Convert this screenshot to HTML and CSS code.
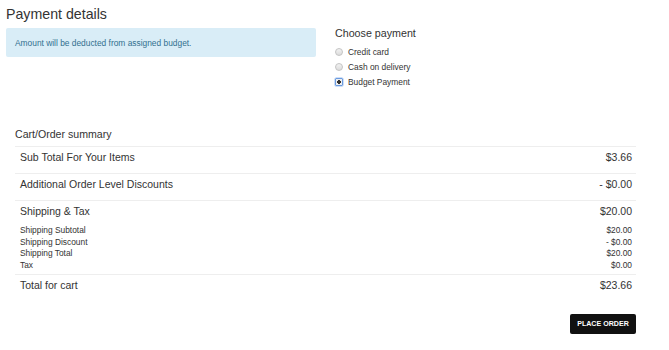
FILE: index.html
```html
<!DOCTYPE html>
<html lang="en">
<head>
  <meta charset="UTF-8">
  <meta name="viewport" content="width=device-width, initial-scale=1.0">
  <title>Payment details</title>
  <link rel="stylesheet" href="styles.css">
</head>
<body>
  <div class="top">
    <div class="col-left">
      <h1>Payment details</h1>
      <div class="alert">Amount will be deducted from assigned budget.</div>
    </div>
    <div class="col-right">
      <h4>Choose payment</h4>
      <label class="radio"><span class="dot"></span>Credit card</label>
      <label class="radio"><span class="dot"></span>Cash on delivery</label>
      <label class="radio"><span class="dot checked"></span>Budget Payment</label>
    </div>
  </div>

  <div class="summary">
    <h4 class="summary-title">Cart/Order summary</h4>
    <div class="row big">
      <span>Sub Total For Your Items</span>
      <span>$3.66</span>
    </div>
    <div class="row big">
      <span>Additional Order Level Discounts</span>
      <span>- $0.00</span>
    </div>
    <div class="group">
      <div class="row big head">
        <span>Shipping &amp; Tax</span>
        <span>$20.00</span>
      </div>
      <div class="row small"><span>Shipping Subtotal</span><span>$20.00</span></div>
      <div class="row small"><span>Shipping Discount</span><span>- $0.00</span></div>
      <div class="row small"><span>Shipping Total</span><span>$20.00</span></div>
      <div class="row small"><span>Tax</span><span>$0.00</span></div>
    </div>
    <div class="row big">
      <span>Total for cart</span>
      <span>$23.66</span>
    </div>
    <div class="actions">
      <button class="button">Place order</button>
    </div>
  </div>
</body>
</html>
```

FILE: styles.css
```css
body {
  font-family: "Liberation Sans", Arial, sans-serif;
  font-size: 8.4px;
  color: #333;
  background-color: #fff;
  margin: 0;
  padding: 0;
}
.top {
  display: grid;
  grid-template-columns: 310px 1fr;
  column-gap: 19px;
  padding-left: 6px;
}
h1 {
  font-size: 14.2px;
  font-weight: normal;
  line-height: 17px;
  margin: 6px 0 0;
}
.alert {
  margin-top: 5px;
  height: 29px;
  padding: 0 9px;
  display: flex;
  align-items: center;
  background-color: #d9edf7;
  color: #31708f;
  border-radius: 2px;
}
.col-right h4 {
  font-size: 10.7px;
  font-weight: normal;
  line-height: 13px;
  margin: 27px 0 4px;
}
.radio {
  display: flex;
  align-items: center;
  height: 15px;
}
.dot {
  width: 6px;
  height: 6px;
  border: 1px solid #c4c4c4;
  border-radius: 50%;
  background: linear-gradient(#f2f2f2, #dcdcdc);
  margin-right: 5px;
}
.dot.checked {
  border-radius: 1px;
  border-color: #6b9be0;
  background: radial-gradient(circle, #333 0 1.6px, #eee 2px);
  box-shadow: 0 0 0 0.5px #9ec0ef;
}
.summary {
  margin: 39px 33px 0 15px;
}
.summary-title {
  font-size: 10.6px;
  font-weight: normal;
  line-height: 13px;
  margin: 0 0 5px;
}
.row {
  display: flex;
  justify-content: space-between;
  padding: 0 4px 0 5px;
}
.big {
  border-top: 1px solid #eee;
  font-size: 10.5px;
  line-height: 13px;
  padding-top: 4px;
  box-sizing: border-box;
  height: 27px;
}
.group {
  border-top: 1px solid #eee;
  padding-bottom: 2px;
}
.group .head {
  border-top: none;
  height: 23px;
  margin-bottom: 1px;
}
.small {
  font-size: 8.4px;
  line-height: 11.7px;
}
.actions {
  display: flex;
  justify-content: flex-end;
  margin-top: 13px;
}
.button {
  font-family: "Liberation Sans", Arial, sans-serif;
  font-size: 7.1px;
  font-weight: bold;
  text-transform: uppercase;
  color: white;
  background-color: #111;
  border: none;
  border-radius: 2px;
  width: 66px;
  height: 20px;
  padding: 0;
}
```
